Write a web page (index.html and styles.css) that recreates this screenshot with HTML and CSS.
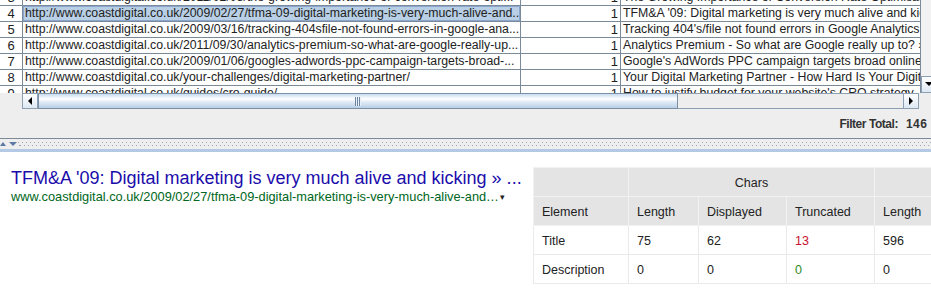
FILE: index.html
```html
<!DOCTYPE html>
<html>
<head>
<meta charset="utf-8">
<link rel="stylesheet" href="styles.css">
</head>
<body>
<div class="top">
  <div class="grid-area">
    <div class="viewport">
      <div class="rows">
        <div class="row"><div class="cell c-num">3</div><div class="cell c-url">http://www.coastdigital.co.uk/2011/02/08/the-growing-importance-of-conversion-rate-opti...</div><div class="cell c-cnt">1</div><div class="cell c-title">The Growing Importance of Conversion Rate Optimisation » Coast Digital</div></div>
        <div class="row"><div class="cell c-num">4</div><div class="cell c-url sel">http://www.coastdigital.co.uk/2009/02/27/tfma-09-digital-marketing-is-very-much-alive-and...</div><div class="cell c-cnt">1</div><div class="cell c-title">TFM&amp;A '09: Digital marketing is very much alive and kicking » Coast Digital</div></div>
        <div class="row"><div class="cell c-num">5</div><div class="cell c-url">http://www.coastdigital.co.uk/2009/03/16/tracking-404sfile-not-found-errors-in-google-ana...</div><div class="cell c-cnt">1</div><div class="cell c-title">Tracking 404's/file not found errors in Google Analytics » Coast Digital</div></div>
        <div class="row"><div class="cell c-num">6</div><div class="cell c-url">http://www.coastdigital.co.uk/2011/09/30/analytics-premium-so-what-are-google-really-up...</div><div class="cell c-cnt">1</div><div class="cell c-title">Analytics Premium - So what are Google really up to? » Coast Digital</div></div>
        <div class="row"><div class="cell c-num">7</div><div class="cell c-url">http://www.coastdigital.co.uk/2009/01/06/googles-adwords-ppc-campaign-targets-broad-...</div><div class="cell c-cnt">1</div><div class="cell c-title">Google's AdWords PPC campaign targets broad online audiences</div></div>
        <div class="row"><div class="cell c-num">8</div><div class="cell c-url">http://www.coastdigital.co.uk/your-challenges/digital-marketing-partner/</div><div class="cell c-cnt">1</div><div class="cell c-title">Your Digital Marketing Partner - How Hard Is Your Digital Marketing Working?</div></div>
        <div class="row"><div class="cell c-num">9</div><div class="cell c-url">http://www.coastdigital.co.uk/guides/cro-guide/</div><div class="cell c-cnt">1</div><div class="cell c-title">How to justify budget for your website's CRO strategy - Coast Digital</div></div>
      </div>
    </div>
    <div class="vscroll">
      <div class="vtrack"></div>
      <div class="sbtn vbtn">
        <svg width="8" height="5" viewBox="0 0 8 5"><path d="M0 0H8L4 4Z" fill="#000"/></svg>
      </div>
    </div>
  </div>
  <div class="hscroll">
    <div class="hs-corner"></div>
    <div class="sbtn hbtn">
      <svg width="4" height="8" viewBox="0 0 4 8"><path d="M4 0V8L0 4Z" fill="#000"/></svg>
    </div>
    <div class="thumb"><span class="grip"></span></div>
    <div class="htrack"></div>
    <div class="sbtn hbtn">
      <svg width="4" height="8" viewBox="0 0 4 8"><path d="M0 0V8L4 4Z" fill="#000"/></svg>
    </div>
    <div class="hs-end"></div>
  </div>
  <div class="filter">
    <span class="flabel">Filter Total:</span><span class="fval">146</span>
  </div>
</div>
<div class="divider">
  <div class="arrows">
    <svg width="18" height="6" viewBox="0 0 18 6"><path d="M0 5L3 1L6 5Z" fill="#5b7aa3"/><path d="M9 1H17L13 5Z" fill="#5b7aa3"/></svg>
  </div>
  <div class="bumps"><div class="bump-row"></div><div class="bump-row off"></div></div>
</div>
<div class="bottom">
  <div class="serp">
    <div class="serp-title">TFM&amp;A '09: Digital marketing is very much alive and kicking » ...</div>
    <div class="serp-url">www.coastdigital.co.uk/2009/02/27/tfma-09-digital-marketing-is-very-much-alive-and…<span class="caret">▾</span></div>
  </div>
  <div class="stats-wrap">
    <table class="stats">
      <colgroup>
        <col class="w-el"><col class="w-len"><col class="w-disp"><col class="w-trunc"><col class="w-plen"><col class="w-pdisp"><col class="w-ptrunc">
      </colgroup>
      <tr class="head">
        <th></th><th colspan="3" class="center">Chars</th><th colspan="3" class="center">Pixels</th>
      </tr>
      <tr class="head">
        <th>Element</th><th>Length</th><th>Displayed</th><th>Truncated</th><th>Length</th><th>Displayed</th><th>Truncated</th>
      </tr>
      <tr>
        <td>Title</td><td>75</td><td>62</td><td class="bad">13</td><td>596</td><td>482</td><td class="bad">114</td>
      </tr>
      <tr>
        <td>Description</td><td>0</td><td>0</td><td class="good">0</td><td>0</td><td>0</td><td class="good">0</td>
      </tr>
    </table>
  </div>
</div>
</body>
</html>
```
FILE: styles.css
```css
* { box-sizing: border-box; }
html, body { margin: 0; padding: 0; }
body {
  width: 931px;
  height: 298px;
  overflow: hidden;
  background: #fff;
  font-family: "Liberation Sans", Arial, sans-serif;
  color: #222;
}

.top { background: #eeeeee; }

.grid-area { display: flex; height: 93px; overflow: hidden; }
.viewport { width: 920px; flex: none; overflow: hidden; background: #fff; }
.rows { margin-top: -10px; }
.row { display: flex; height: 16px; }
.cell {
  flex: none;
  height: 16px;
  border-right: 1px solid #7a8a99;
  border-bottom: 1px solid #7a8a99;
  font-size: 12.3px;
  line-height: 15px;
  white-space: nowrap;
  overflow: hidden;
  padding-left: 2px;
  color: #222;
}
.c-num { width: 23px; padding: 0; text-align: center; font-size: 13px; }
.c-url { width: 498px; }
.c-cnt { width: 100px; text-align: right; padding-right: 2px; font-size: 13px; }
.c-title { width: 400px; border-right: 0; }
.sel { background: #b8cfe5; box-shadow: inset 0 0 0 1px #8aa6cc; }

.vscroll {
  flex: none;
  width: 17px;
  display: flex;
  flex-direction: column;
  border-left: 1px solid #7a8a99;
  background: #eeeeee;
}
.vtrack { flex: 1; background: #f2f2f2; }

.sbtn {
  flex: none;
  display: flex;
  align-items: center;
  justify-content: center;
  background: linear-gradient(#ffffff, #dde8f3);
  border: 1px solid #8da0b3;
}
.vbtn { height: 17px; width: 16px; }

.hscroll {
  display: flex;
  height: 16px;
  background: #eeeeee;
}
.hs-corner { width: 22px; flex: none; background: #eeeeee; }
.hbtn { width: 16px; height: 16px; }
.thumb {
  flex: none;
  width: 640px;
  height: 16px;
  border: 1px solid #7b8fa5;
  background: linear-gradient(#c8dcf1 0%, #ffffff 35%, #dde9f6 60%, #b8cfe5 100%);
  display: flex;
  align-items: center;
  justify-content: center;
}
.grip {
  width: 6px;
  height: 9px;
  background: repeating-linear-gradient(to right, #6f86a3 0 1px, #e9f0f8 1px 2px);
}
.htrack {
  flex: none;
  width: 225px;
  border-top: 1px solid #8da0b3;
  border-bottom: 1px solid #8da0b3;
  background: #eeeeee;
}
.hs-end { flex: 1; background: #eeeeee; }

.filter {
  height: 29px;
  display: flex;
  justify-content: flex-end;
  align-items: center;
  font-size: 12px;
  font-weight: bold;
  color: #333;
  padding-top: 1px;
}
.flabel { letter-spacing: -0.45px; }
.fval { margin-left: 8px; width: 25px; letter-spacing: 0.4px; }

.divider {
  height: 14px;
  background: #eeeeee;
  border-top: 1px solid #7a8a99;
  border-bottom: 3px solid #b3c9e4;
  display: flex;
  align-items: center;
}
.arrows { flex: none; display: flex; align-items: center; width: 18px; height: 10px; }
.bumps { flex: 1; display: flex; flex-direction: column; gap: 2px; }
.bump-row {
  height: 1px;
  background: repeating-linear-gradient(to right, #9aa8b8 0 1px, transparent 1px 4px);
}
.bump-row.off { background-position: 2px 0; }

.bottom { display: flex; align-items: flex-start; background: #fff; }
.serp { width: 533px; flex: none; padding: 16px 0 0 11px; overflow: hidden; }
.serp-title {
  font-size: 18px;
  line-height: 21px;
  color: #1a0dab;
  white-space: nowrap;
}
.serp-url {
  font-size: 12.8px;
  line-height: 16px;
  color: #006621;
  white-space: nowrap;
}
.caret { font-size: 9px; color: #222; margin-left: 1px; vertical-align: 1px; }

.stats-wrap { flex: none; margin-top: 15px; width: 398px; overflow: hidden; }
.stats {
  border-collapse: collapse;
  table-layout: fixed;
  width: 620px;
  font-size: 12.5px;
  color: #222;
}
.w-el { width: 95px; }
.w-len { width: 70px; }
.w-disp { width: 88px; }
.w-trunc { width: 88px; }
.w-plen { width: 88px; }
.w-pdisp { width: 95px; }
.w-ptrunc { width: 96px; }
.stats th, .stats td {
  height: 29px;
  padding: 1px 0 0 8px;
  text-align: left;
  font-weight: normal;
  border: 1px solid #eaeaea;
  white-space: nowrap;
}
.stats .head th { background: #e4e4e4; border-color: #f2f2f2; }
.stats th.center { text-align: center; padding-left: 0; }
.bad { color: #c8102e; }
.good { color: #2e8b1f; }
```
